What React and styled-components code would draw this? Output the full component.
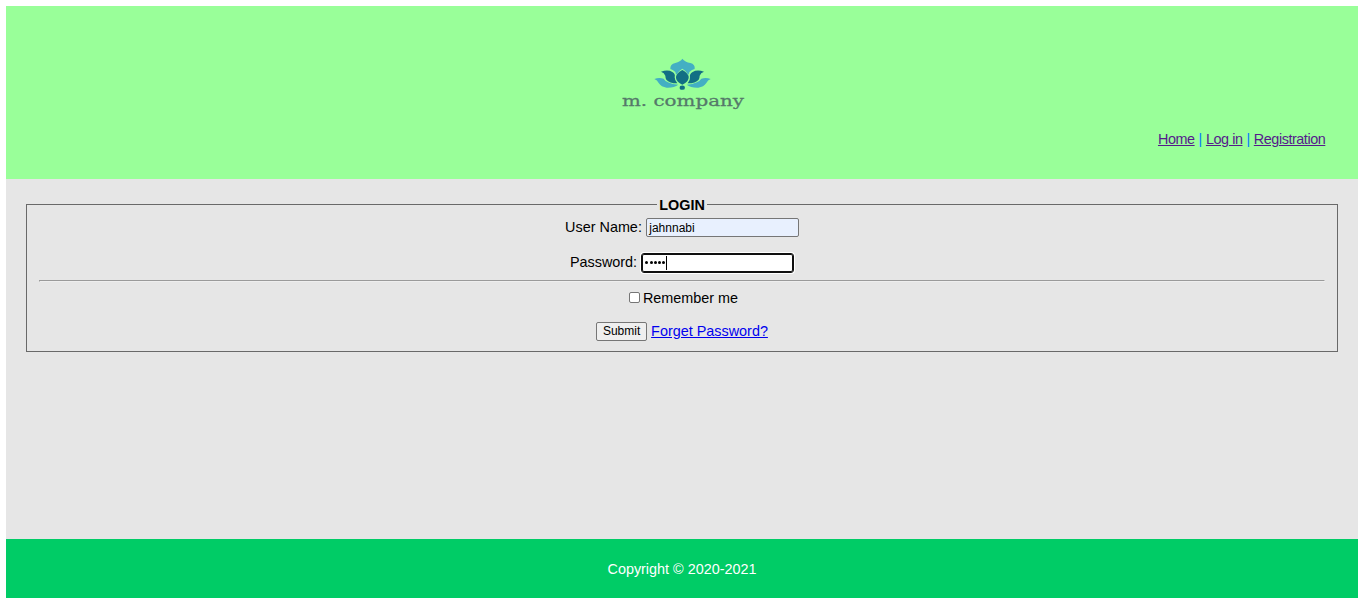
import React from "react";
import styled, { createGlobalStyle } from "styled-components";

const GlobalStyle = createGlobalStyle`
  * { box-sizing: border-box; }
  body {
    margin: 0;
    background: #fff;
    color: #000;
    font: 14.4px/16px "Liberation Sans", Arial, sans-serif;
  }
`;

const Page = styled.div`
  display: flex;
  flex-direction: column;
  width: 1352px;
  margin: 6px 0 0 6px;
`;

const Header = styled.header`
  display: flex;
  flex-direction: column;
  height: 173px;
  padding-top: 44px;
  background: #99ff99;
`;

const Logo = styled.svg`
  display: block;
  width: 140px;
  height: 66px;
  margin: 0 auto;
`;

const Nav = styled.nav`
  display: flex;
  justify-content: flex-end;
  gap: 4px;
  margin-top: 15px;
  padding-right: 32.7px;
  color: #0078ff;
  font-size: 14.4px;
  letter-spacing: -0.44px;
`;

const Link = styled.a`
  color: ${(p) => (p.$visited ? "#551a8b" : "#0000ee")};
  text-decoration: underline;
`;

const Main = styled.main`
  height: 360px;
  padding: 18px 20px 0;
  background: #e6e6e6;
`;

const Fieldset = styled.fieldset`
  height: 155px;
  margin: 0;
  padding: 6px 12px 0;
  border: 1px solid #696969;
`;

const Legend = styled.legend`
  height: 15px;
  margin: 0 auto;
  padding: 0 2px;
  font-weight: bold;
`;

const Row = styled.div`
  display: flex;
  align-items: center;
  justify-content: center;
  gap: ${(p) => p.$gap || 4}px;
  height: 19px;
  margin-top: ${(p) => p.$top || 0}px;
  padding-left: ${(p) => p.$indent || 0}px;
`;

const Label = styled.label`
  padding-bottom: ${(p) => (p.$raised ? 2 : 0)}px;
  white-space: nowrap;
`;

const LinkSlot = styled.span`
  padding-bottom: 2px;
`;

const Field = styled.div`
  display: flex;
  flex: none;
  align-items: center;
  width: 153px;
  height: 19px;
  padding: 0 2.4px;
  border: 1px solid #767676;
  border-radius: 2px;
  background: ${(p) => (p.$filled ? "#e8f0fe" : "#fff")};
  font-size: 12px;
  line-height: 14px;
  ${(p) =>
    p.$focused &&
    `height: 20px;
     margin-bottom: -1px;
     padding-bottom: 1px;
     border-color: #101010;
     box-shadow: inset 0 0 0 1px #101010, 0 0 0 1px #fff;
     border-radius: 3px;`}
`;

const Dots = styled.span`
  display: flex;
  gap: 1.2px;
  padding: 0 0.6px 0 1px;
`;

const Dot = styled.i`
  width: 3px;
  height: 3px;
  border-radius: 50%;
  background: #000;
`;

const Caret = styled.span`
  width: 1px;
  height: 14px;
  background: #000;
`;

const Divider = styled.hr`
  height: 2px;
  margin: 8px 0 0;
  border: 1px solid;
  border-color: #9a9a9a #eeeeee #eeeeee #9a9a9a;
`;

const Checkbox = styled.span`
  width: 11px;
  height: 11px;
  border: 1px solid #767676;
  border-radius: 2px;
  background: #fff;
`;

const Button = styled.button`
  width: 51px;
  height: 19px;
  padding: 0 0 1px;
  border: 1px solid #767676;
  border-radius: 2px;
  background: #efefef;
  color: #000;
  font: 12px/14px "Liberation Sans", Arial, sans-serif;
`;

const Footer = styled.footer`
  display: flex;
  align-items: center;
  justify-content: center;
  height: 59px;
  background: #00cc66;
  color: #fff;
`;

function CompanyLogo() {
  return (
    <Logo viewBox="0 0 420 198">
      <g fill="#43afc3">
        <path d="M211 26Q219 36 235 39Q250 43 248 57Q240 59 232 66Q231 71 229 74Q221 61 211 56Q201 61 193 74Q191 71 190 66Q182 59 175 57Q174 42 190 39Q205 35 211 26Z" />
        <path d="M127 87Q141 81 155 86Q162 100 199 104Q186 114 164 113Q148 111 140 99Q136 90 127 87Z" />
        <path d="M296 87Q282 81 268 86Q260 100 224 104Q237 114 259 113Q275 111 283 99Q287 90 296 87Z" />
      </g>
      <g fill="#126f84">
        <path d="M211 60Q231 70 230 84Q228 97 211 104Q194 97 192 84Q191 70 211 60Z" />
        <path d="M147 65Q168 58 181 66Q191 71 188 82Q188 91 196 100Q172 100 163 89Q160 84 160 77Q157 68 147 65Z" />
        <path d="M276 65Q255 58 242 66Q232 71 234 82Q235 91 227 100Q251 100 260 89Q263 84 263 77Q266 68 276 65Z" />
        <ellipse cx="211" cy="113" rx="8" ry="6.5" />
      </g>
      <text
        x="30"
        y="168"
        textLength="366"
        lengthAdjust="spacingAndGlyphs"
        fill="#55796a"
        stroke="#55796a"
        strokeWidth="0.8"
        fontFamily="DejaVu Serif, serif"
        fontSize="46"
      >
        m. company
      </text>
    </Logo>
  );
}

export default function App() {
  return (
    <>
      <GlobalStyle />
      <Page>
        <Header>
          <CompanyLogo />
          <Nav>
            <Link $visited>Home</Link>
            <span>|</span>
            <Link $visited>Log in</Link>
            <span>|</span>
            <Link $visited>Registration</Link>
          </Nav>
        </Header>
        <Main>
          <Fieldset>
            <Legend>LOGIN</Legend>
            <Row>
              <Label $raised>User Name:</Label>
              <Field $filled>jahnnabi</Field>
            </Row>
            <Row $top={16}>
              <Label $raised>Password:</Label>
              <Field $focused>
                <Dots>
                  {[0, 1, 2, 3, 4].map((n) => (
                    <Dot key={n} />
                  ))}
                </Dots>
                <Caret />
              </Field>
            </Row>
            <Divider />
            <Row $top={6} $gap={3} $indent={3}>
              <Checkbox />
              <Label>Remember me</Label>
            </Row>
            <Row $top={15}>
              <Button type="button">Submit</Button>
              <LinkSlot>
                <Link>Forget Password?</Link>
              </LinkSlot>
            </Row>
          </Fieldset>
        </Main>
        <Footer>Copyright © 2020-2021</Footer>
      </Page>
    </>
  );
}
